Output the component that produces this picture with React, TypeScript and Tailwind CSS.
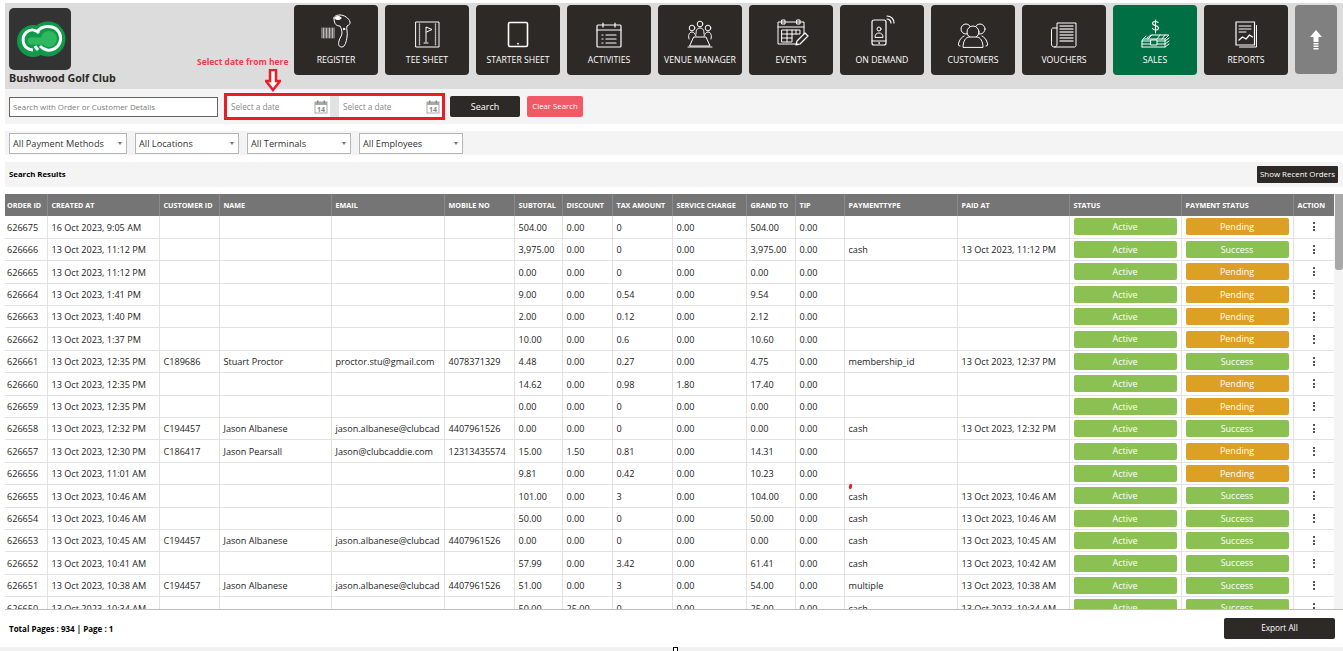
import type { ReactNode } from 'react'

const font = { fontFamily: '"Open Sans", "Noto Sans", sans-serif' }

// icon box is 40x36 for every nav tile
function Box({ children }: { children: ReactNode }) {
    return (
        <svg viewBox="0 0 40 36" className="w-[40px] h-[36px]" fill="none" stroke="#fff" strokeWidth="1" strokeLinecap="round" strokeLinejoin="round">
            {children}
        </svg>
    )
}

const icons: Record<string, ReactNode> = {
    register: (
        <Box>
            <path d="M6 15v10M7.500 15v10M9 15v10M10.500 15v10M12 15v10M13.500 15v10M15 15v10M16.500 15v10M18 15v10" stroke="#c9c9c9" strokeWidth="0.9" />
            <path d="M18 5c0-2 3-3 6-3 4 0 9 3 10 7 .5 2-1 3-3 4-1 3 1 6 0 11-.5 4-2 10-5 10-3 0-4-2-3-6 .5-3 3-5 3-8 0-3-1-5-2-7-3 0-6-1-6-8z" />
            <ellipse cx="22" cy="5" rx="3" ry="1.500" fill="#fff" />
            <circle cx="28" cy="16" r="0.8" fill="#fff" />
        </Box>
    ),
    tee: (
        <Box>
            <rect x="9" y="9" width="23" height="25" />
            <path d="M12.500 11v21M28.500 11v21" strokeDasharray="1 1.200" strokeWidth="1.400" stroke="#bbb" />
            <path d="M19 29V14l6 2.500-5.500 2.500" />
            <path d="M17 30h4" />
        </Box>
    ),
    starter: (
        <Box>
            <rect x="10.500" y="9.500" width="19" height="24" rx="1.500" strokeWidth="1.600" />
            <circle cx="20" cy="30.700" r="0.9" fill="#fff" stroke="none" />
        </Box>
    ),
    activities: (
        <Box>
            <rect x="8" y="12" width="24" height="22" rx="1" strokeWidth="1.200" />
            <path d="M8 17h24M14 10v4M26 10v4" strokeWidth="1.200" />
            <path d="M13 22h1M17 22h10M13 26h1M17 26h10M13 30h1M17 30h10" strokeWidth="1.200" />
        </Box>
    ),
    venue: (
        <Box>
            <circle cx="20" cy="11" r="2.800" />
            <circle cx="12" cy="15" r="2.800" />
            <circle cx="28" cy="15" r="2.800" />
            <path d="M16 21c0-4 1-6 4-6s4 2 4 6M9 26c-1-3 0-7 3-7 2 0 3 2 4 4M31 26c1-3 0-7-3-7-2 0-3 2-4 4" />
            <path d="M14 24h12l4 9H10z" />
            <path d="M8 34h24" />
        </Box>
    ),
    events: (
        <Box>
            <path d="M27 31H7V9h26v12" />
            <path d="M7 14h26" />
            <rect x="11" y="7" width="3" height="4" />
            <rect x="26" y="7" width="3" height="4" />
            <path d="M11 17h18v4h-8v8H11zM11 21h10M11 25h10M16 17v12M21 17v4M25 17v4" />
            <path d="M25 32l1-4 8-8 3 3-8 8z" strokeWidth="1.200" />
        </Box>
    ),
    demand: (
        <Box>
            <rect x="10" y="7" width="14" height="25" rx="2" strokeWidth="1.200" />
            <path d="M10 28h14" />
            <circle cx="17" cy="30" r="0.4" />
            <circle cx="17" cy="16" r="2" />
            <path d="M13 24c0-3 2-4 4-4s4 1 4 4z" />
            <path d="M25 6c2 0 4 2 4 4M25 3c4 0 7 3 7 7" strokeWidth="1.200" />
        </Box>
    ),
    customers: (
        <Box>
            <circle cx="13" cy="16" r="5" />
            <circle cx="27" cy="16" r="5" />
            <path d="M7 33c-2 0-2-1-1-4 1-3 3-5 5-6M33 33c2 0 2-1 1-4-1-3-3-5-5-6" />
            <circle cx="20" cy="19" r="6" fill="#2d2926" />
            <path d="M10 34c0-6 3-10 6-10h8c3 0 6 4 6 10z" fill="#2d2926" />
        </Box>
    ),
    vouchers: (
        <Box>
            <path d="M13 15H9c-1 0-1.500 1-1.500 2v14c0 2 1 3 3 3h20c1 0 1.500-1 1.500-1.500V10H13v21c0 2-1 3-2.500 3" />
            <path d="M16 13h13M16 16h13M16 19h13M16 22h13M16 25h13M16 28h13" stroke="#cfcfcf" strokeWidth="1.400" />
        </Box>
    ),
    sales: (
        <Box>
            <path d="M23 9.500c-1-1.500-5-1.500-5.500.5-.5 3 6 2 6 5 0 2.500-4.500 2.500-6 .5M20.500 7v13" strokeWidth="1.100" />
            <path d="M12 25l4-3h18l-4 4H8l3-3M7 28h23l4-3M7 31h23l4-3M7 34h23l4-3M8 26l-1 2v6M30 26v8" />
            <rect x="16" y="27" width="6" height="5" fill="#006f43" />
            <path d="M17 22l-4 4M25 22l-3 4M30 22l-3 4" />
        </Box>
    ),
    reports: (
        <Box>
            <path d="M30.500 12.500V34h-17" strokeWidth="1" />
            <rect x="10" y="9" width="18.500" height="23" strokeWidth="1.200" />
            <path d="M13 13h12M13 16h12M13 19h7" />
            <path d="M13 27l3.500-3 3.500 2 3.500-4 3 2" strokeWidth="1.300" />
        </Box>
    ),
}

const navItems = [
    { key: 'register', label: 'REGISTER' },
    { key: 'tee', label: 'TEE SHEET' },
    { key: 'starter', label: 'STARTER SHEET' },
    { key: 'activities', label: 'ACTIVITIES' },
    { key: 'venue', label: 'VENUE MANAGER' },
    { key: 'events', label: 'EVENTS' },
    { key: 'demand', label: 'ON DEMAND' },
    { key: 'customers', label: 'CUSTOMERS' },
    { key: 'vouchers', label: 'VOUCHERS' },
    { key: 'sales', label: 'SALES' },
    { key: 'reports', label: 'REPORTS' },
]

function Logo() {
    return (
        <div className="w-[62px] h-[62px] rounded-[5px] bg-[#333333]">
            <svg viewBox="0 0 62 62" className="w-full h-full" fill="none">
                <circle cx="24" cy="33" r="16" fill="#0f9a4a" />
                <circle cx="39" cy="31" r="17.500" fill="#0f9a4a" />
                <circle cx="40" cy="31" r="8" fill="#2fb85f" />
                <path d="M22 33h14" stroke="#2fb85f" strokeWidth="7" strokeLinecap="round" />
                <path d="M30 25c-4-4-9-4-13-.5-4 4-4 12 1 15.500 2 1.500 4 2 6 2" stroke="#fff" strokeWidth="3" />
                <path d="M28 24c4-6 10-6 15-5 7 2 10 9 8 15-2 6-8 9-13 8-3-.5-5-2-7-4" stroke="#fff" strokeWidth="3" />
                <path d="M29 42c-1-1-2-2-3-4" stroke="#fff" strokeWidth="3" />
            </svg>
        </div>
    )
}

function DateCell() {
    return (
        <div className="w-[103px] h-[21px] bg-white flex items-center justify-between pl-[4px] pr-[2px] text-[8.200px] text-[#8a8a8a]">
            <span className="pt-[1px]">Select a date</span>
            <svg viewBox="0 0 14 14" className="w-[14px] h-[14px]">
                <rect x="1" y="2" width="12" height="11" fill="#fff" stroke="#a8a8a8" />
                <rect x="1" y="2" width="12" height="3" fill="#a8a8a8" />
                <rect x="3" y="0.500" width="1.500" height="3" fill="#8a8a8a" />
                <rect x="9.500" y="0.500" width="1.500" height="3" fill="#8a8a8a" />
                <text x="7" y="11.800" textAnchor="middle" fontSize="7" fill="#8a8a8a" fontWeight="700">14</text>
            </svg>
        </div>
    )
}

function FilterSelect({ label, width }: { label: string; width: string }) {
    return (
        <div className={`${width} h-[21px] bg-white border border-[#b5b5b5] flex items-center justify-between pl-[3px] pr-[4px] text-[9.200px] text-[#333]`}>
            <span>{label}</span>
            <span className="w-0 h-0 border-x-[2.500px] border-x-transparent border-t-[3px] border-t-[#777]" />
        </div>
    )
}

type Row = {
    id: string
    created: string
    cid?: string
    name?: string
    email?: string
    mobile?: string
    sub: string
    disc: string
    tax: string
    svc: string
    grand: string
    pay?: string
    paid?: string
}

const albanese = { cid: 'C194457', name: 'Jason Albanese', email: 'jason.albanese@clubcad', mobile: '4407961526' }

const rows: Row[] = [
    { id: '626675', created: '16 Oct 2023, 9:05 AM', sub: '504.00', disc: '0.00', tax: '0', svc: '0.00', grand: '504.00' },
    { id: '626666', created: '13 Oct 2023, 11:12 PM', sub: '3,975.00', disc: '0.00', tax: '0', svc: '0.00', grand: '3,975.00', pay: 'cash', paid: '13 Oct 2023, 11:12 PM' },
    { id: '626665', created: '13 Oct 2023, 11:12 PM', sub: '0.00', disc: '0.00', tax: '0', svc: '0.00', grand: '0.00' },
    { id: '626664', created: '13 Oct 2023, 1:41 PM', sub: '9.00', disc: '0.00', tax: '0.54', svc: '0.00', grand: '9.54' },
    { id: '626663', created: '13 Oct 2023, 1:40 PM', sub: '2.00', disc: '0.00', tax: '0.12', svc: '0.00', grand: '2.12' },
    { id: '626662', created: '13 Oct 2023, 1:37 PM', sub: '10.00', disc: '0.00', tax: '0.6', svc: '0.00', grand: '10.60' },
    { id: '626661', created: '13 Oct 2023, 12:35 PM', cid: 'C189686', name: 'Stuart Proctor', email: 'proctor.stu@gmail.com', mobile: '4078371329', sub: '4.48', disc: '0.00', tax: '0.27', svc: '0.00', grand: '4.75', pay: 'membership_id', paid: '13 Oct 2023, 12:37 PM' },
    { id: '626660', created: '13 Oct 2023, 12:35 PM', sub: '14.62', disc: '0.00', tax: '0.98', svc: '1.80', grand: '17.40' },
    { id: '626659', created: '13 Oct 2023, 12:35 PM', sub: '0.00', disc: '0.00', tax: '0', svc: '0.00', grand: '0.00' },
    { id: '626658', created: '13 Oct 2023, 12:32 PM', ...albanese, sub: '0.00', disc: '0.00', tax: '0', svc: '0.00', grand: '0.00', pay: 'cash', paid: '13 Oct 2023, 12:32 PM' },
    { id: '626657', created: '13 Oct 2023, 12:30 PM', cid: 'C186417', name: 'Jason Pearsall', email: 'Jason@clubcaddie.com', mobile: '12313435574', sub: '15.00', disc: '1.50', tax: '0.81', svc: '0.00', grand: '14.31' },
    { id: '626656', created: '13 Oct 2023, 11:01 AM', sub: '9.81', disc: '0.00', tax: '0.42', svc: '0.00', grand: '10.23' },
    { id: '626655', created: '13 Oct 2023, 10:46 AM', sub: '101.00', disc: '0.00', tax: '3', svc: '0.00', grand: '104.00', pay: 'cash', paid: '13 Oct 2023, 10:46 AM' },
    { id: '626654', created: '13 Oct 2023, 10:46 AM', sub: '50.00', disc: '0.00', tax: '0', svc: '0.00', grand: '50.00', pay: 'cash', paid: '13 Oct 2023, 10:46 AM' },
    { id: '626653', created: '13 Oct 2023, 10:45 AM', ...albanese, sub: '0.00', disc: '0.00', tax: '0', svc: '0.00', grand: '0.00', pay: 'cash', paid: '13 Oct 2023, 10:45 AM' },
    { id: '626652', created: '13 Oct 2023, 10:41 AM', sub: '57.99', disc: '0.00', tax: '3.42', svc: '0.00', grand: '61.41', pay: 'cash', paid: '13 Oct 2023, 10:42 AM' },
    { id: '626651', created: '13 Oct 2023, 10:38 AM', ...albanese, sub: '51.00', disc: '0.00', tax: '3', svc: '0.00', grand: '54.00', pay: 'multiple', paid: '13 Oct 2023, 10:38 AM' },
    { id: '626650', created: '13 Oct 2023, 10:34 AM', sub: '50.00', disc: '25.00', tax: '0', svc: '0.00', grand: '25.00', pay: 'cash', paid: '13 Oct 2023, 10:34 AM' },
]

const columns = [
    { label: 'ORDER ID', w: 'w-[42px]' },
    { label: 'CREATED AT', w: 'w-[112px]' },
    { label: 'CUSTOMER ID', w: 'w-[60px]' },
    { label: 'NAME', w: 'w-[112px]' },
    { label: 'EMAIL', w: 'w-[113px]' },
    { label: 'MOBILE NO', w: 'w-[70px]' },
    { label: 'SUBTOTAL', w: 'w-[48px]' },
    { label: 'DISCOUNT', w: 'w-[50px]' },
    { label: 'TAX AMOUNT', w: 'w-[60px]' },
    { label: 'SERVICE CHARGE', w: 'w-[74px]' },
    { label: 'GRAND TO', w: 'w-[49px]' },
    { label: 'TIP', w: 'w-[49px]' },
    { label: 'PAYMENTTYPE', w: 'w-[113px]' },
    { label: 'PAID AT', w: 'w-[112px]' },
    { label: 'STATUS', w: 'w-[112px]' },
    { label: 'PAYMENT STATUS', w: 'w-[112px]' },
    { label: 'ACTION', w: 'w-[41px]' },
]

function Cell({ children, first }: { children?: ReactNode; first?: boolean }) {
    return (
        <td className={`h-[22.400px] p-0 border-r border-b border-[#e2e2e2] overflow-hidden whitespace-nowrap ${first ? 'pl-[2px]' : 'pl-[4px]'}`}>
            <div className="pt-[1px]">{children}</div>
        </td>
    )
}

function Badge({ text, color }: { text: string; color: string }) {
    return <div className={`${color} h-[17px] -mt-[1px] mr-[4px] rounded-[2px] flex items-center justify-center text-white text-[9px]`}>{text}</div>
}

export default function App() {
    return (
        <div className="relative w-[1343px] h-[651px] overflow-hidden bg-white pt-[3px] pl-[5px] text-[#222]" style={font}>
            <header className="relative h-[86px] bg-[#dcdcdc] flex pl-[4px]">
                <div className="w-[285px] pt-[5px]">
                    <Logo />
                    <p className="mt-[1px] text-[10.700px] leading-[15px] font-bold text-[#2d2926] whitespace-nowrap">Bushwood Golf Club</p>
                </div>
                <nav className="flex gap-[7px] pt-[2px]">
                    {navItems.map((item) => (
                        <div
                            key={item.key}
                            className={`w-[84px] h-[70px] rounded-[4px] flex flex-col items-center pt-[8px] ${item.key === 'sales' ? 'bg-[#006f43]' : 'bg-[#2d2926]'}`}
                        >
                            {icons[item.key]}
                            <span className="mt-[5px] text-[8.700px] leading-[12px] text-white whitespace-nowrap">{item.label}</span>
                        </div>
                    ))}
                    <div className="w-[42px] h-[69px] rounded-[4px] bg-[#808080] flex items-center justify-center">
                        <svg viewBox="0 0 12 20" className="w-[12px] h-[20px]" fill="#fff">
                            <path d="M6 0l6 7H8.500v5h-5V7H0z" />
                            <rect x="3.500" y="13" width="5" height="1.500" />
                            <rect x="3.500" y="15.500" width="5" height="1.500" />
                            <rect x="3.500" y="18" width="5" height="1.500" />
                        </svg>
                    </div>
                </nav>
                {/* annotation drawn over the screenshot */}
                <span className="absolute left-[192px] top-[52px] text-[8.500px] leading-[14px] font-bold text-[#ee3b4b] whitespace-nowrap">Select date from here</span>
                <svg viewBox="0 0 16 23" className="absolute left-[260px] top-[66px] w-[16px] h-[23px]" fill="#fff" stroke="#ed1c24" strokeWidth="2.500">
                    <path d="M5 1h6v11h4l-7 9-7-9h4z" />
                </svg>
            </header>

            <section className="h-[35px] bg-[#f4f4f4] flex items-center pl-[4px]">
                <input
                    placeholder="Search with Order or Customer Details"
                    className="w-[209px] h-[20px] bg-white border border-[#666] pl-[3px] text-[7.900px] placeholder:text-[#7a7a7a] outline-none"
                />
                <div className="ml-[6px] w-[221px] h-[27px] border-[3px] border-[#ed1c24] bg-[#e2e2e2] flex justify-between">
                    <DateCell />
                    <DateCell />
                </div>
                <button className="ml-[5px] w-[70px] h-[21px] rounded-[2px] bg-[#2d2926] text-white text-[9px]">Search</button>
                <button className="ml-[7px] w-[56px] h-[21px] rounded-[2px] bg-[#f05a66] text-white text-[7.800px] whitespace-nowrap">Clear Search</button>
            </section>

            <section className="mt-[7px] h-[24px] bg-[#f4f4f4] flex items-start gap-[8px] pl-[4px] pt-[2px]">
                <FilterSelect label="All Payment Methods" width="w-[118px]" />
                <FilterSelect label="All Locations" width="w-[104px]" />
                <FilterSelect label="All Terminals" width="w-[104px]" />
                <FilterSelect label="All Employees" width="w-[104px]" />
            </section>

            <section className="mt-[7px] h-[25px] bg-[#f4f4f4] flex items-center justify-between pl-[4px] pr-[5px]">
                <span className="pt-[1px] text-[7.800px] font-bold text-black">Search Results</span>
                <button className="w-[81px] h-[17px] rounded-[1px] bg-[#2d2926] text-white text-[7.900px] whitespace-nowrap">Show Recent Orders</button>
            </section>

            <div className="mt-[7px] h-[416px] flex border-b border-[#bdbdbd]">
                <div className="w-[1329px] overflow-hidden">
                    <table className="w-[1329px] table-fixed border-collapse text-[9.100px] text-[#222]">
                        <colgroup>
                            {columns.map((c) => (
                                <col key={c.label} className={c.w} />
                            ))}
                        </colgroup>
                        <thead>
                            <tr className="h-[22px] bg-[#757575] text-white text-[7.200px] font-bold">
                                {columns.map((c, i) => (
                                    <th key={c.label} className={`p-0 text-left font-bold whitespace-nowrap overflow-hidden border-r border-[#8a8a8a] ${i === 0 ? 'pl-[2px]' : 'pl-[4px]'}`}>
                                        {c.label}
                                    </th>
                                ))}
                            </tr>
                        </thead>
                        <tbody>
                            {rows.map((r) => {
                                const success = !!r.pay
                                return (
                                    <tr key={r.id}>
                                        <Cell first>{r.id}</Cell>
                                        <Cell>{r.created}</Cell>
                                        <Cell>{r.cid}</Cell>
                                        <Cell>{r.name}</Cell>
                                        <Cell>{r.email}</Cell>
                                        <Cell>{r.mobile}</Cell>
                                        <Cell>{r.sub}</Cell>
                                        <Cell>{r.disc}</Cell>
                                        <Cell>{r.tax}</Cell>
                                        <Cell>{r.svc}</Cell>
                                        <Cell>{r.grand}</Cell>
                                        <Cell>0.00</Cell>
                                        <Cell>{r.pay}</Cell>
                                        <Cell>{r.paid}</Cell>
                                        <Cell><Badge text="Active" color="bg-[#8bc152]" /></Cell>
                                        <Cell>{success ? <Badge text="Success" color="bg-[#8bc152]" /> : <Badge text="Pending" color="bg-[#dca124]" />}</Cell>
                                        <Cell>
                                            <div className="flex justify-center pr-[3px] -mt-[1px]">
                                                <span className="flex flex-col gap-[1.500px]">
                                                    <i className="w-[2px] h-[2px] bg-[#555]" />
                                                    <i className="w-[2px] h-[2px] bg-[#555]" />
                                                    <i className="w-[2px] h-[2px] bg-[#555]" />
                                                </span>
                                            </div>
                                        </Cell>
                                    </tr>
                                )
                            })}
                        </tbody>
                    </table>
                </div>
                <div className="w-[9px] bg-[#f4f4f4]">
                    <div className="ml-[1px] h-[76px] rounded-b-[3px] bg-[#a8a8a8]" />
                </div>
            </div>

            <footer className="h-[37px] flex items-center justify-between pl-[4px] pr-[8px]">
                <span className="pt-[1px] text-[8px] font-bold text-black">Total Pages : 934 | Page : 1</span>
                <button className="w-[111px] h-[21px] rounded-[2px] bg-[#2d2926] text-white text-[8.200px]">Export All</button>
            </footer>

            <div className="absolute left-0 right-0 bottom-0 h-[4px] bg-[#f1f1f1]" />
            {/* stray marks in the capture */}
            <span className="absolute left-[849px] top-[484px] w-[3px] h-[5px] rounded-full bg-[#ed1c24] rotate-12" />
            <span className="absolute left-[673px] top-[647px] w-[5px] h-[5px] border border-black bg-white" />
        </div>
    )
}
